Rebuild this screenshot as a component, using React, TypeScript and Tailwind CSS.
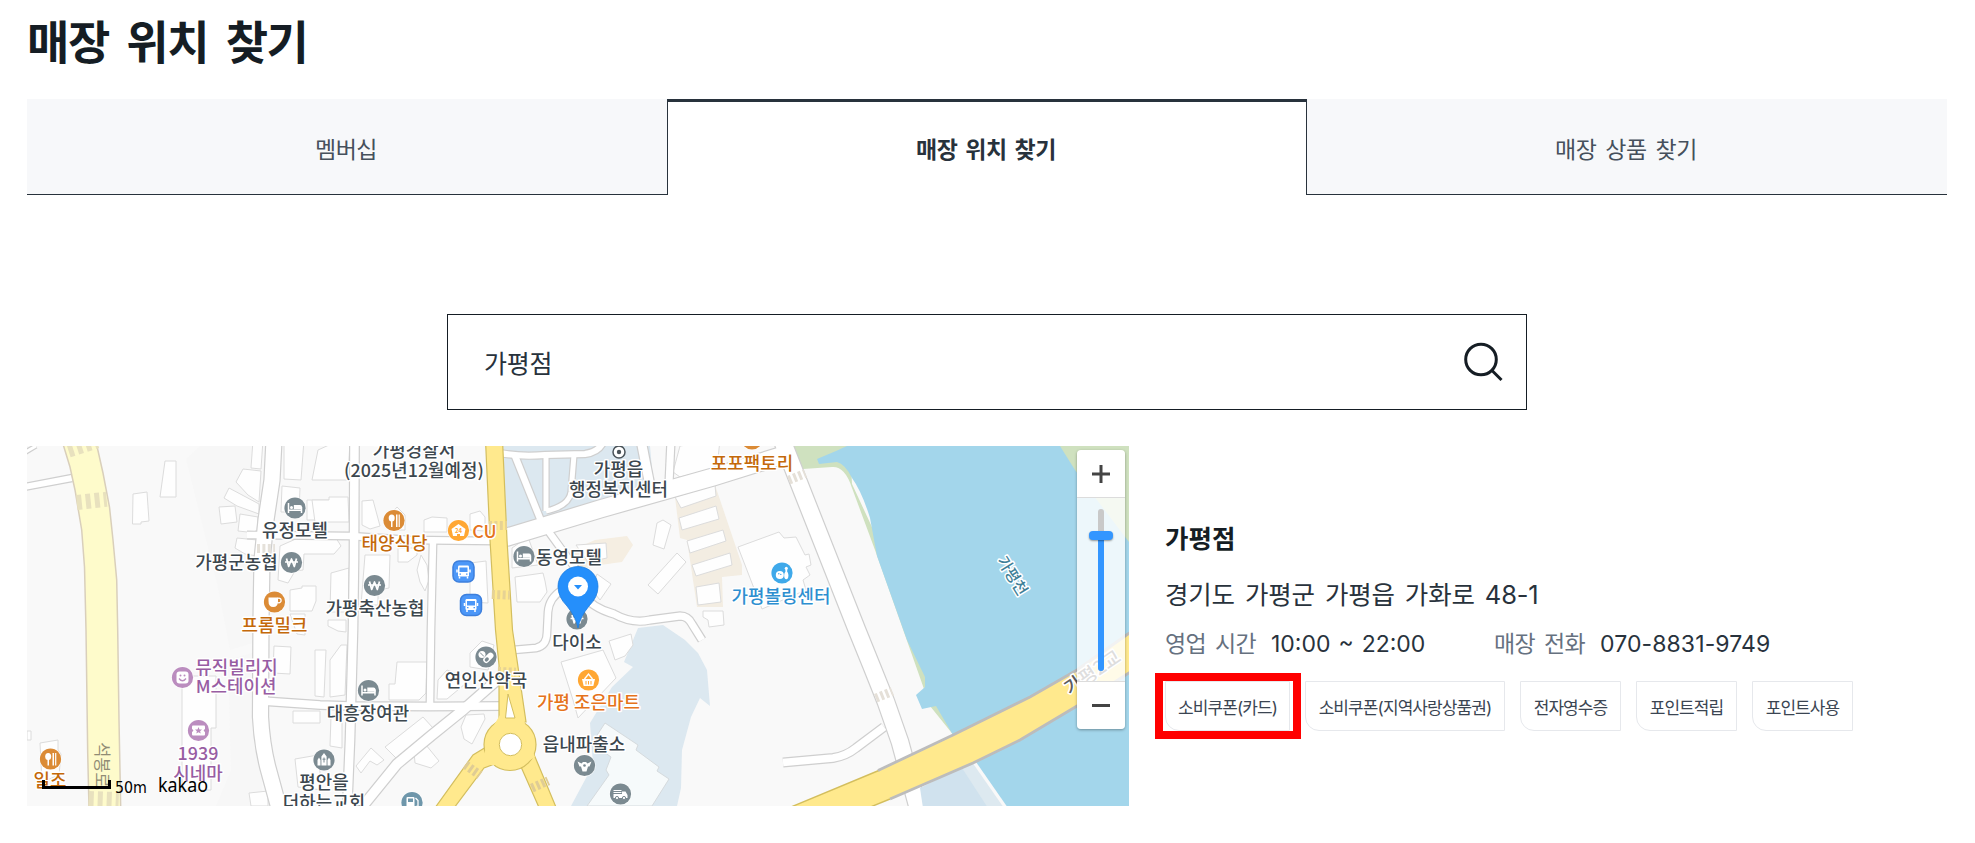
import type { ReactNode } from "react"
import { clsx } from "clsx"

const tabs = [
  { label: "멤버십", active: false },
  { label: "매장 위치 찾기", active: true },
  { label: "매장 상품 찾기", active: false },
]

const services = [
  { label: "소비쿠폰(카드)", width: "w-[125px]", highlighted: true },
  { label: "소비쿠폰(지역사랑상품권)", width: "w-[200px]" },
  { label: "전자영수증", width: "w-[101px]" },
  { label: "포인트적립", width: "w-[101px]" },
  { label: "포인트사용", width: "w-[101px]" },
]

const GRAY = "#7b8a91"
const ORANGE = "#db8b36"
const AMBER = "#ffa733"
const PURPLE = "#bb8dbf"

const minorRoads: { d: string; w: number }[] = [
  { d: "M24 487 L72 478", w: 6 },
  { d: "M24 453 L36 446", w: 3 },
  { d: "M274 440 L272 480 L266 520 L262 560 L261 620 L260.5 717 Q262 745 268 768 L280 812", w: 15 },
  { d: "M262 701 L320 705 L350 706 L430 706.5 L502 706", w: 7.5 },
  { d: "M354.5 440 L354 560 L353 630 L351 703 L350 740 L347 812", w: 8.5 },
  { d: "M247 535 L350 536 L410 540 L496 541", w: 6.5 },
  { d: "M433 543 L431 630 L430 704", w: 6.5 },
  { d: "M496 681 L463 710 L432 735 L397 764 L358 812", w: 9.5 },
  { d: "M500 453 Q520 457 545 455 L585 454 Q600 452 604 440", w: 6 },
  { d: "M515 456 L541 521 L578 572", w: 6.5 },
  { d: "M546 455 L546 511", w: 5 },
  { d: "M546 511 Q569 506 571 492 L574 455", w: 5 },
  { d: "M641 440 L650 486", w: 9 },
  { d: "M671 440 L669 484", w: 7 },
  { d: "M513 650 L536 648 Q547 646 547 632 L548 612 Q549 598 562 590 L576 588", w: 6.5 },
  { d: "M580 592 Q592 608 614 614 Q632 624 650 620 L680 616 Q688 616 692 624 L702 640", w: 7 },
  { d: "M504 538 L600 509 L713 477 L790 453", w: 17 },
  { d: "M782 440 L857 630 L872 667 L886 702 L900 742 L919 812", w: 16.5 },
  { d: "M783 762.5 L833 758 Q846 756 856 748 L884 727", w: 7.5 },
]

// Building footprints, drawn as plain outlined shapes.
const buildings: string[] = [
  "165,461 176,461 176,497 160,497",
  "133,494 147,492 149,521 141,522 141,524 132.5,524",
  "253,440 263,440 261,469 251,468",
  "243,469 261,471 259,502 248,495 236,482",
  "229,488 259,504 259,514 237,506 224,498",
  "219,507 235,506 237,522 221,524",
  "240,514 258,517 257,533 238,531",
  "237,538 257,540 257,556 245,554 235,548",
  "284,440 304,440 301,480 284,479",
  "282,486 300,488 299,512 281,512",
  "307,500 330,500 330,520 307,520",
  "318,450 340,440 350,440 348,480 312,480",
  "280,546 298,538 336,538 341,546 334,554 304,554 303,570 295,571 288,583 278,580",
  "290,590 302,588 302,586 316,586 316,601 312,611 290,611",
  "290,614 305,614 305,635 297,634",
  "274,646 291,647 290,674 273,673",
  "315,650 326,650 324,697 315,696",
  "312,500 329,500 329,497 348,497 349,522 315,522",
  "293,711 320,711 320,723 293,723",
  "362,501 373,500 380,526 370,529 362,525",
  "424,520 432,517 447,518 447,532 424,532",
  "470,514 480,511 485,517 485,531 470,530",
  "390,515 397,507 405,515 405,530 390,530",
  "365,555 390,555 389,588 378,590 378,605 361,605",
  "421,555 427,565 429,580 425,591 420,582 417,570",
  "398,548 417,548 417,555 408,562 398,562",
  "470,563 486,561 488,603 470,602",
  "331,573 349,568 349,612 330,612",
  "328,620 346,620 346,632 338,631 328,626",
  "330,660 341,645 347,645 345,695 330,697",
  "397,662 427,662 426,693 419,700 389,700 389,684 395,684",
  "331,716 342,722 342,748 330,746",
  "385,747 423,717 433,728 397,759",
  "356,766 371,748 384,760 377,765 370,761 361,773",
  "414,752 426,745 439,761 431,768 415,763",
  "466,715 484,714 485,719 472,744 464,739 461,727",
  "438,680 447,670 463,676 465,684 447,699 437,699",
  "470,653 482,641 494,645 488,670 470,667",
  "512,548 528,537 538,565 512,568",
  "515,577 543,573 545,581 547,592 540,602 517,602",
  "561,662 603,650 616,678 578,718 573,700",
  "609,641 631,634 633,645 625,656 615,660",
  "576,545 606,543 607,558 588,562",
  "675,497 715,485 716,496 681,508",
  "679,518 716,506 719,519 682,530",
  "687,541 723,530 726,541 690,553",
  "692,565 730,553 732,565 696,576",
  "696,587 719,583 721,602 698,605",
  "703,611 723,611 724,625 709,627 708,620 703,617",
  "657,523 663,520 671,525 664,549 653,545",
  "677,553 686,562 658,594 648,585",
  "738,547 779,532 784,538 796,537 805,555 809,554 811,565 806,567 810,575 803,580 806,590 762,609",
  "597,574 611,584 600,600 592,590",
  "182,676 216,676 216,728 211,728 211,790 182,790",
  "27,731 31,731 31,740 27,740",
  "40,743 58,740 58,750 61,754 59,775 42,782",
  "295,759 318,755 322,790 298,787",
  "249,793 268,791 268,806 251,806",
  "680,446 720,440 717,468 680,477 673,472",
]

const crosswalks: { x: number; y: number; angle: number; color: string; size?: number }[] = [
  { x: 66, y: 443, angle: -18, color: "#e8e1be" },
  { x: 76, y: 495, angle: -6, color: "#e8e1be" },
  { x: 89, y: 791, angle: 2, color: "#e8e1be" },
  { x: 257, y: 544, angle: 0, color: "#e5e1da", size: 0.6 },
  { x: 489, y: 521, angle: 0, color: "#e6d294", size: 0.6 },
  { x: 492, y: 590, angle: 2, color: "#e6d294", size: 0.6 },
  { x: 498, y: 667, angle: 2, color: "#e6d294", size: 0.6 },
  { x: 468, y: 761, angle: 36, color: "#dfcc95", size: 0.6 },
  { x: 530, y: 784, angle: -24, color: "#dfcc95", size: 0.6 },
  { x: 787, y: 476, angle: -22, color: "#e5e0d8", size: 0.6 },
  { x: 874, y: 694, angle: -22, color: "#e5e0d8", size: 0.6 },
]

const TEXT = "#3c474e"
const BROWN = "#c4690a"
const TANGERINE = "#e5731c"
const VIOLET = "#985da3"

const labels: { x: number; y: number; text: string; color?: string }[] = [
  { x: 414, y: 456.5, text: "가평경찰서" },
  { x: 414, y: 476.5, text: "(2025년12월예정)" },
  { x: 618.5, y: 476, text: "가평읍" },
  { x: 618.5, y: 496, text: "행정복지센터" },
  { x: 752, y: 470, text: "포포팩토리", color: BROWN },
  { x: 295, y: 537, text: "유정모텔" },
  { x: 236.5, y: 569, text: "가평군농협" },
  { x: 274.5, y: 631.5, text: "프롬밀크", color: BROWN },
  { x: 394.5, y: 550, text: "태양식당", color: BROWN },
  { x: 484.5, y: 537.5, text: "CU", color: TANGERINE },
  { x: 375, y: 614.5, text: "가평축산농협" },
  { x: 569, y: 563.5, text: "동영모텔" },
  { x: 781, y: 603, text: "가평볼링센터", color: "#2e8fd0" },
  { x: 236.5, y: 674, text: "뮤직빌리지", color: VIOLET },
  { x: 236, y: 693, text: "M스테이션", color: VIOLET },
  { x: 198, y: 760, text: "1939", color: VIOLET },
  { x: 198, y: 779.5, text: "시네마", color: VIOLET },
  { x: 50, y: 787, text: "일조", color: BROWN },
  { x: 368, y: 720, text: "대흥장여관" },
  { x: 486, y: 687, text: "연인산약국" },
  { x: 577, y: 648.5, text: "다이소" },
  { x: 588.5, y: 708.5, text: "가평 조은마트", color: TANGERINE },
  { x: 584, y: 750.5, text: "읍내파출소" },
  { x: 324, y: 788.5, text: "평안을" },
  { x: 324, y: 808.5, text: "더하는교회" },
]

function Marker({ x, y, color = GRAY, children }: { x: number; y: number; color?: string; children?: ReactNode }) {
  return (
    <g transform={`translate(${x} ${y})`}>
      <circle r="11.2" fill="#fff" opacity="0.7" />
      <circle r="10.6" fill={color} />
      {children}
    </g>
  )
}

function BedGlyph() {
  return (
    <g>
      <path d="M-6.5 -5 V5 M-6.5 2.3 H6.5 M6.5 5 V-1" stroke="#fff" strokeWidth="1.5" />
      <path d="M-1.2 1.2 V-3 H5 Q7 -3 7 -1 V1.2 Z" fill="#fff" />
      <circle cx="-3.5" cy="-0.6" r="1.5" fill="#fff" />
    </g>
  )
}

function WonGlyph() {
  return (
    <path
      d="M-5 -4 L-2.8 4 L0 -3.5 L2.8 4 L5 -4 M-6.5 -0.5 H6.5"
      fill="none"
      stroke="#fff"
      strokeWidth="1.7"
      strokeLinejoin="round"
    />
  )
}

function FoodGlyph() {
  return (
    <g fill="#fff">
      <ellipse cx="-2.3" cy="-2.5" rx="3" ry="3.5" />
      <rect x="-3" y="0" width="1.5" height="6.5" />
      <rect x="2" y="-6" width="1.5" height="12.5" />
      <rect x="4.6" y="-6" width="1.2" height="12.5" />
    </g>
  )
}

function BusStop({ x, y }: { x: number; y: number }) {
  return (
    <g transform={`translate(${x} ${y})`}>
      <rect x="-10.5" y="-10.5" width="21" height="21" rx="6" fill="#4c97f8" stroke="#3d7fdc" strokeWidth="1.5" />
      <rect x="-5.5" y="-6" width="11" height="11" rx="1.2" fill="#fff" />
      <rect x="-4" y="-4" width="8" height="4.5" fill="#4c97f8" />
      <path d="M-4 5 V7 M4 5 V7 M-6.5 -2 V1 M6.5 -2 V1" stroke="#fff" strokeWidth="1.5" />
      <path d="M-4 2.6 H-2.5 M2.5 2.6 H4" stroke="#4c97f8" strokeWidth="1.2" />
    </g>
  )
}

function Markers() {
  return (
    <g>
      <g transform="translate(619 452)">
        <circle r="6" fill="#fff" stroke="#4a5359" strokeWidth="1.5" />
        <circle r="2.2" fill="#4a5359" />
      </g>
      <Marker x={752} y={439} color={ORANGE} />
      <Marker x={295} y={508}><BedGlyph /></Marker>
      <Marker x={524} y={556.5}><BedGlyph /></Marker>
      <Marker x={368.5} y={690.5}><BedGlyph /></Marker>
      <Marker x={291.5} y={562.5}><WonGlyph /></Marker>
      <Marker x={374.5} y={585.5}><WonGlyph /></Marker>
      <Marker x={577} y={619}><WonGlyph /></Marker>
      <Marker x={394} y={520.5} color={ORANGE}><FoodGlyph /></Marker>
      <Marker x={50.5} y={759} color={ORANGE}><FoodGlyph /></Marker>
      <Marker x={274.5} y={602} color={ORANGE}>
        <path d="M-6 -4.5 H3.5 V-1 Q3.5 5 -1.3 5 Q-6 5 -6 -1 Z" fill="#fff" />
        <circle cx="4.3" cy="-1.5" r="2.3" fill="none" stroke="#fff" strokeWidth="1.3" />
      </Marker>
      <Marker x={458.5} y={530.5} color={AMBER}>
        <path d="M-7 -1.5 L0 -6.5 L7 -1.5 L5.5 5.5 H1.5 V3.5 H-1.5 V5.5 H-5.5 Z" fill="#fff" />
        <text y="2.5" textAnchor="middle" fontSize="6" fontWeight="700" fill={AMBER}>24</text>
      </Marker>
      {/* bowling ball and pin */}
      <Marker x={782} y={573} color="#3fa9ea">
        <circle cx="-2.2" cy="2" r="4" fill="#fff" />
        <ellipse cx="4.3" cy="2.5" rx="2.1" ry="3.8" fill="#fff" />
        <path d="M3.4 0 V-4 H5.2 V0 Z" fill="#fff" />
        <circle cx="4.3" cy="-4.8" r="1.5" fill="#fff" />
        <circle cx="-3.2" cy="0.8" r="0.7" fill="#3fa9ea" />
        <circle cx="-1.2" cy="1.4" r="0.7" fill="#3fa9ea" />
      </Marker>
      <Marker x={182.5} y={677.5} color={PURPLE}>
        <rect x="-6" y="-6" width="12" height="12" rx="3" fill="#fff" />
        <circle cx="-2" cy="-2" r="1" fill={PURPLE} />
        <circle cx="2" cy="-2" r="1" fill={PURPLE} />
        <path d="M-3.5 1 Q0 5.5 3.5 1" fill="none" stroke={PURPLE} strokeWidth="1.3" />
      </Marker>
      <Marker x={198.5} y={730.5} color={PURPLE}>
        <rect x="-6.5" y="-5" width="13" height="10" rx="1" fill="#fff" />
        <circle cx="-6.5" r="1.2" fill={PURPLE} />
        <circle cx="6.5" r="1.2" fill={PURPLE} />
        <path d="M0 -3.5 L1 -1 L3.5 -0.9 L1.6 0.7 L2.2 3.1 L0 1.8 L-2.2 3.1 L-1.6 0.7 L-3.5 -0.9 L-1 -1 Z" fill={PURPLE} />
      </Marker>
      <Marker x={486} y={657}>
        <circle cx="-4" cy="-2.5" r="3.5" fill="#fff" />
        <path d="M-6 -4.5 L-2 -0.5" stroke={GRAY} strokeWidth="1" />
        <g transform="rotate(-45 2.5 1)">
          <rect x="-3.5" y="-2.2" width="12" height="6" rx="3" fill="#fff" />
          <rect x="-2" y="-0.9" width="4.5" height="3.4" rx="1.7" fill={GRAY} />
        </g>
      </Marker>
      <Marker x={588.5} y={680} color={AMBER}>
        <path d="M-6.5 -1 H6.5 L4.8 6 H-4.8 Z" fill="#fff" />
        <path d="M-4 -1 L0 -6 L4 -1" fill="none" stroke="#fff" strokeWidth="1.4" />
        <path d="M-2.5 1 V4.5 M0 1 V4.5 M2.5 1 V4.5" stroke={AMBER} strokeWidth="1" />
      </Marker>
      <Marker x={584.5} y={765.5}>
        <path d="M-7 -4 L-3 -2 L-1.5 -3.5 H1.5 L3 -2 L7 -4 L5 1 H3.5 L2 6 H-2 L-3.5 1 H-5 Z" fill="#fff" />
        <circle cy="0" r="1.3" fill={GRAY} />
      </Marker>
      <Marker x={324} y={760}>
        <path d="M-2.6 5.5 V-3.5 L0 -7 L2.6 -3.5 V5.5 Z M-6.5 5.5 V0 L-5 -2.5 L-3.5 0 V5.5 Z M3.5 5.5 V0 L5 -2.5 L6.5 0 V5.5 Z" fill="#fff" />
        <path d="M0 -2.5 V2.5 M-1.5 -0.8 H1.5" stroke={GRAY} strokeWidth="1" />
      </Marker>
      <Marker x={412} y={802.5} color="#6f97ab">
        <rect x="-5.5" y="-5.5" width="8" height="12" rx="1" fill="#fff" />
        <rect x="-4" y="-4" width="5" height="3.5" fill="#6f97ab" />
        <path d="M3.5 -4.5 L6 -2 V4 H4" fill="none" stroke="#fff" strokeWidth="1.3" />
      </Marker>
      <Marker x={620.5} y={794}>
        <path d="M-7 0 H1.5 V-2.5 H5 L7 1 V4 H-7 Z" fill="#fff" />
        <path d="M-7 -3.5 H1 M-7 -1.5 H1" stroke="#fff" strokeWidth="1" />
        <circle cx="-3.5" cy="4" r="1.6" fill="#fff" stroke={GRAY} />
        <circle cx="3.5" cy="4" r="1.6" fill="#fff" stroke={GRAY} />
      </Marker>
      <BusStop x={463.5} y={571.5} />
      <BusStop x={471} y={605} />
    </g>
  )
}

function StoreMap() {
  return (
    <svg
      viewBox="27 446 1102 360"
      className="block h-[360px] w-[1102px] font-['Noto_Sans_CJK_KR',sans-serif]"
      role="img"
      aria-label="매장 지도"
    >
      <rect x="27" y="446" width="1102" height="360" fill="#f9f9f9" />
      <path d="M200 446 L186 459 L218 588 L230 650 L262 640 V446 Z M228 660 L262 650 V806 H216 L231 770 Z" fill="#f7f7f7" />

      {/* parks, school and water */}
      <path d="M503 446 H650 L654 492 L506 534 Z" fill="#dce8f0" />
      <path d="M638 628 L663 625 L685 640 L698 653 L707 670 L710 706 L700 698 L691 717 L682 750 L681 788 L677 806 H571 L593 765 L590 723 L612 687 L633 667 L624 662 Z" fill="#dce8f0" />
      <path d="M605 723 L638 745 L636 750 L659 767 L657 771 L669 779 L652 806 H587 L609 775 L606 770 L611 757 L592 743 Z" fill="#f6fafb" stroke="#d5dadd" />
      <path d="M675 497 L715 485 L742 565 V575 L722 577 L723 607 L697 607 L687 540 L680 538 Z" fill="#f3ede2" />
      <path d="M568 552 L595 540 L627 536 L633 545 L622 562 L600 565 L578 570 Z" fill="#f5eee2" />
      <path d="M793 446 H850 L852 484 L878 540 L890 588 L926 677 V684 L924 690 L930 705 L937 706 L955 737 L930 706 L875 550 L852 488 Q845 466 832 467 L803 469 Z" fill="#cfe1bf" />
      <path d="M817 459 L836 451 L847 446 H1129 V806 H1005 L973 763 L953 735 L936 706 L922 709 L916 695 L925 687 V677 L907 640 L877 556 L870 518 Q862 492 852 478 Q845 464 837 462 L819 464 Z" fill="#a3d6eb" />
      <path d="M1060 446 H1129 V542 L1097 500 L1075 470 Z" fill="#cfe1bf" />

      {/* buildings */}
      <g fill="#fefefe" stroke="#dcdcdc" strokeWidth="1">
        {buildings.map((points) => (
          <polygon key={points} points={points} />
        ))}
      </g>

      {/* minor roads: casing first so that junctions stay open */}
      <g fill="none" stroke="#cfcfcf">
        {minorRoads.map((road) => (
          <path key={road.d} d={road.d} strokeWidth={road.w + 2.4} />
        ))}
      </g>
      <g fill="none" stroke="#fff">
        {minorRoads.map((road) => (
          <path key={road.d} d={road.d} strokeWidth={road.w} />
        ))}
      </g>

      {/* left avenue */}
      <path
        d="M63 444 L70 467 L75 490 L81.7 530 L84.5 567 L86 630 L87.7 753 L89 808 H120.7 L119 720 L117.7 630 L116.7 580 L113 540 L109.5 507 L103 473 L96.5 444 Z"
        fill="#fefbcb"
        stroke="#d9cfbb"
        strokeWidth="1.5"
      />

      {/* main street with the roundabout */}
      <g fill="#ffe98d" stroke="#d3be5e" strokeWidth="1.2">
        <path d="M485.5 440 L490 540 L495.5 630 L499 665 V722 H526 L517 660 L512.5 630 L507 540 L502.5 440 Z" />
        <path d="M491 744 L473 755 L432 812 L451 812 L484 768 L500 762 Z" />
        <path d="M518 760 L541 812 H558 L533 752 Z" />
        <circle cx="510" cy="744.5" r="26" />
      </g>
      <path d="M500 715 L524 715 L526 735 L535 757 L522 765 L490 765 L484 757 L488 735 Z" fill="#ffe98d" />
      <path d="M508 694 L515 718 H505.5 Z" fill="#fff" stroke="#d3be5e" />
      <circle cx="510.5" cy="744.5" r="11.2" fill="#fff" stroke="#d3be5e" />

      {/* bridge */}
      <path d="M920 788 L972 762 L1005 808 H923 Z" fill="#d0e2ee" />
      <path d="M962 768 L973 762 L1005 808 H988 Z" fill="#dde9f0" />
      <path d="M972 762 L976 762 L1008 808 H1004 Z" fill="#f9f9f9" />
      <path d="M793 806 L880 770 L953 735 L1030 697 L1077 670 L1135 629 V669 L1077 706 L1020 740 L973 763 L890 799 L868 808 Z" fill="#ffe98d" />
      <path d="M791 807 L880 770 M890 799 L868 808" stroke="#d3be5e" strokeWidth="1.4" />
      <path d="M878 770.5 L953 735 L1030 697 L1077 670 L1135 629 M890 799 L973 763 L1020 740 L1077 706 L1135 669" fill="none" stroke="#bcbcbc" strokeWidth="2.8" />

      {crosswalks.map((c) => (
        <g
          key={`${c.x}-${c.y}`}
          transform={`translate(${c.x} ${c.y}) rotate(${c.angle}) scale(${c.size ?? 1})`}
          fill={c.color}
        >
          <rect x="0" y="0" width="5" height="15" />
          <rect x="9" y="0" width="5" height="15" />
          <rect x="18" y="0" width="5" height="15" />
          <rect x="27" y="0" width="3" height="15" />
        </g>
      ))}

      <Markers />

      <g
        fontSize="17.9"
        fontWeight="500"
        textAnchor="middle"
        stroke="#fff"
        strokeWidth="3"
        strokeLinejoin="round"
        paintOrder="stroke"
      >
        {labels.map((label) => (
          <text key={label.text} x={label.x} y={label.y} fill={label.color ?? TEXT}>
            {label.text}
          </text>
        ))}
        <text transform="translate(1012 576) rotate(58)" y="5" fontSize="15.5" fill="#3f8098">가평천</text>
        <text transform="translate(1093 673) rotate(-34)" y="6" fontSize="19" fill="#5c5c5c">가평2교</text>
      </g>
      <text transform="translate(102 765) rotate(90)" y="6" fontSize="16.5" textAnchor="middle" fill="#908c75">석봉로</text>

      {/* selected store */}
      <path d="M578 628 Q576 617 567 606 Q558 597 558 586.5 A20 20 0 0 1 598 586.5 Q598 597 589 606 Q580 617 578 628 Z" fill="#258ffb" stroke="#1c7ce0" strokeWidth="0.8" />
      <circle cx="578" cy="586.5" r="10" fill="#fff" />
      <path d="M574 585 H582 L578 589.5 Z" fill="#258ffb" />

      {/* scale bar */}
      <path d="M43.5 780 V787.5 H109.5 V780" fill="none" stroke="#000" strokeWidth="3" />
      <text x="115" y="792.5" fontSize="15" textLength="32" lengthAdjust="spacingAndGlyphs" className="font-['DejaVu_Sans',sans-serif]">50m</text>
      <text x="158" y="791.5" fontSize="19" textLength="50" lengthAdjust="spacingAndGlyphs" className="font-['Noto_Sans',sans-serif]">kakao</text>
    </svg>
  )
}

function ZoomControl() {
  return (
    <div className="absolute top-1 right-1 flex h-[279px] w-12 flex-col overflow-hidden rounded shadow-[0_1px_3px_rgba(0,0,0,0.35)]">
      <button type="button" aria-label="확대" className="flex h-12 items-center justify-center border-b border-[#dcdcdc] bg-white">
        <svg viewBox="0 0 18 18" className="size-[18px]">
          <path d="M9 0 V18 M0 9 H18" stroke="#444" strokeWidth="3" />
        </svg>
      </button>
      <div className="flex flex-1 justify-center bg-white/80 pt-[11px] pb-[10px]">
        <div className="relative flex w-1.5 flex-col rounded-full bg-[#c9c9c9] pt-6">
          <div className="flex-1 rounded-b-full bg-[#3396ff]" />
          <div className="absolute top-[22px] -left-[9px] h-[9px] w-6 rounded bg-[#3396ff] shadow-[0_1px_2px_rgba(0,0,0,0.4)]" />
        </div>
      </div>
      <button type="button" aria-label="축소" className="flex h-12 items-center justify-center border-t border-[#dcdcdc] bg-white">
        <svg viewBox="0 0 18 3" className="h-[3px] w-[18px]">
          <path d="M0 1.5 H18" stroke="#444" strokeWidth="3" />
        </svg>
      </button>
    </div>
  )
}

function StoreInfo() {
  return (
    <section className="ml-9 pt-[73px]">
      <h2 className="text-[25.5px] leading-[40px] font-bold text-[#151d24]">가평점</h2>
      <p className="mt-4 text-[25.5px] leading-[40px] tracking-[-0.15px] text-[#28323c] [word-spacing:3px]">
        경기도 가평군 가평읍 가화로 48-1
      </p>
      <dl className="mt-[11px] flex text-[23px] leading-[36px]">
        <dt className="w-[106px] tracking-[-0.6px] text-[#66717f] [word-spacing:3px]">영업 시간</dt>
        <dd className="w-[223px] text-[#28323c] [word-spacing:1.5px]">10:00 ~ 22:00</dd>
        <dt className="w-[106px] tracking-[-0.6px] text-[#66717f] [word-spacing:3px]">매장 전화</dt>
        <dd className="tracking-[0.1px] text-[#28323c]">070-8831-9749</dd>
      </dl>
      <ul className="mt-[19px] flex gap-[15px]">
        {services.map((service) => (
          <li
            key={service.label}
            className={clsx(
              "relative flex h-[50px] items-center justify-center rounded-bl-[14px] border border-[#e6e8ec] pt-[5px] text-[17px] tracking-[-0.9px] whitespace-nowrap text-[#3b4552]",
              service.width,
            )}
          >
            {service.label}
            {service.highlighted && (
              <span className="absolute -top-[9px] -left-[11px] h-[66px] w-[146px] border-8 border-[#ff0000]" />
            )}
          </li>
        ))}
      </ul>
    </section>
  )
}

export default function App() {
  return (
    <main className="h-[843px] w-[1975px] overflow-hidden bg-white pr-7 pl-[27px] font-['Inter','Noto_Sans_CJK_KR',sans-serif]">
      <h1 className="pt-[14px] text-[46px] leading-[56px] font-bold tracking-[-1.4px] text-[#151d24] [word-spacing:8px]">
        매장 위치 찾기
      </h1>
      <nav className="mt-[29px] grid h-24 grid-cols-3">
        {tabs.map((tab) => (
          <a
            key={tab.label}
            href="#"
            className={clsx(
              "flex items-center justify-center pr-0.5 text-[23px] tracking-[-0.5px] [word-spacing:3px]",
              tab.active
                ? "border-x border-t-[3px] border-[#28323c] bg-white pt-1 font-bold text-[#28323c]"
                : "border-b border-[#28323c] bg-[#f7f8fa] pt-[7px] text-[#46505c]",
            )}
          >
            {tab.label}
          </a>
        ))}
      </nav>
      <form className="mx-auto mt-[119px] flex h-24 w-[1080px] items-center justify-between border border-[#151d24] pr-[23px] pl-9">
        <input
          type="text"
          defaultValue="가평점"
          aria-label="매장 검색"
          className="w-[800px] pt-[5px] text-[25px] tracking-[-0.2px] text-[#28323c] outline-none"
        />
        <button type="button" aria-label="검색">
          <svg viewBox="0 0 40 40" className="size-10" fill="none" stroke="#151d24" strokeWidth="3">
            <circle cx="18" cy="17.5" r="15.3" />
            <path d="M28.5 28 L38.5 38" />
          </svg>
        </button>
      </form>
      <div className="mt-9 flex">
        <div className="relative h-[360px] w-[1102px]">
          <StoreMap />
          <ZoomControl />
        </div>
        <StoreInfo />
      </div>
    </main>
  )
}
